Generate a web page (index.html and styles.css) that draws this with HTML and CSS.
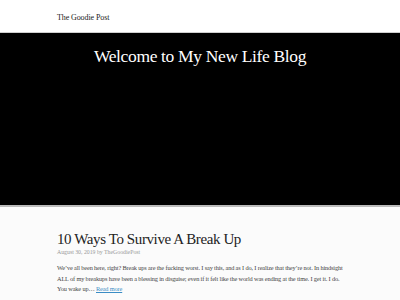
FILE: index.html
```html
<!DOCTYPE html>
<html>
<head>
<meta charset="utf-8">
<link rel="stylesheet" href="styles.css">
</head>
<body>
<header class="topbar">
  <div class="container">
    <a class="site-title" href="#">The Goodie Post</a>
  </div>
</header>
<section class="hero">
  <h1 class="hero-title">Welcome to My New Life Blog</h1>
</section>
<main class="container content">
  <article class="post">
    <h2 class="post-title">10 Ways To Survive A Break Up</h2>
    <div class="post-meta">August 30, 2019 by TheGoodiePost</div>
    <p class="post-excerpt">We’ve all been here, right? Break ups are the fucking worst. I say this, and as I do, I realize that they’re not. In hindsight ALL of my breakups have been a blessing in disguise; even if it felt like the world was ending at the time. I get it. I do. You wake up… <a href="#" class="read-more">Read more</a></p>
  </article>
</main>
</body>
</html>
```

FILE: styles.css
```css
html, body {
  margin: 0;
  padding: 0;
}
body {
  background: #fbfbfb;
  font-family: "Liberation Serif", "Times New Roman", serif;
  color: #333;
  height: 300px;
  overflow: hidden;
}
.container {
  width: 286px;
  margin: 0 auto;
}
.topbar {
  background: #fff;
  height: 32px;
  border-bottom: 1px solid #cfcfcf;
}
.topbar .container {
  display: flex;
  align-items: center;
  height: 32px;
}
.site-title {
  font-size: 8px;
  color: #222;
  text-decoration: none;
  margin-top: 2px;
  letter-spacing: -0.1px;
}
.hero {
  background: #000;
  height: 172px;
  border-bottom: 2px solid #bbb;
  display: flex;
  justify-content: center;
}
.hero-title {
  margin: 13px 0 0;
  font-weight: normal;
  font-size: 17.5px;
  letter-spacing: -0.35px;
  color: #fff;
}
.content {
  padding-top: 22px;
}
.post-title {
  margin: 0;
  font-size: 15px;
  letter-spacing: -0.4px;
  font-weight: normal;
  color: #222;
  line-height: 20px;
}
.post-meta {
  font-size: 5.8px;
  color: #999;
  margin-top: 0;
}
.post-excerpt {
  margin: 8px 0 0;
  font-size: 6.3px;
  letter-spacing: -0.14px;
  line-height: 10.6px;
  color: #444;
}
.read-more {
  color: #3b8dc5;
}
```
